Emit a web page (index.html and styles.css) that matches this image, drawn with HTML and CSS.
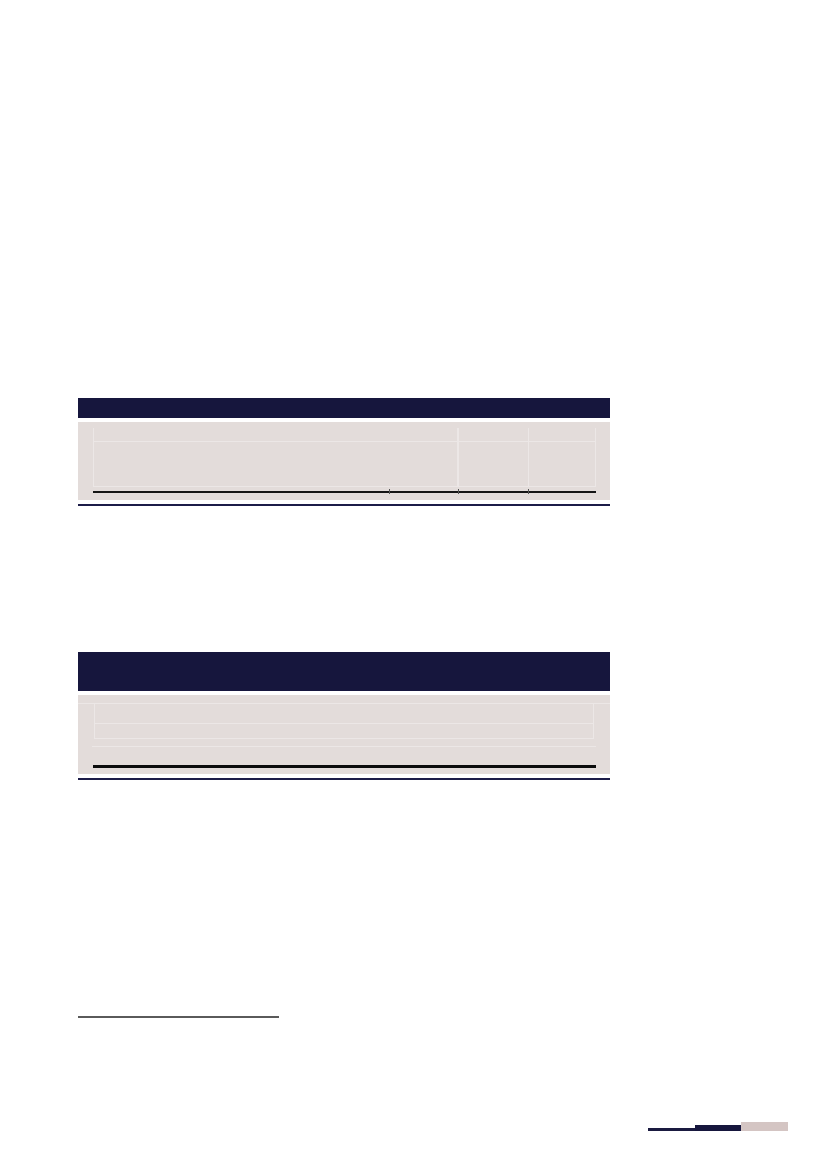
FILE: index.html
```html
<!DOCTYPE html>
<html>
<head>
<meta charset="utf-8">
<link rel="stylesheet" href="styles.css">
</head>
<body>
<div class="page">
  <section class="tbl tbl-one">
    <div class="tbl-head"></div>
    <div class="tbl-body">
      <div class="grid grid-one">
        <div class="cell c1 r1"></div><div class="cell c2 r1"></div><div class="cell c3 r1 vl"></div><div class="cell c4 r1 vl vr"></div>
        <div class="cell c1 r2"></div><div class="cell c2 r2"></div><div class="cell c3 r2 vl"></div><div class="cell c4 r2 vl vr"></div>
      </div>
      <div class="rule rule-one">
        <span class="tick" style="left:296px"></span>
        <span class="tick" style="left:365px"></span>
        <span class="tick" style="left:435px"></span>
      </div>
    </div>
    <div class="tbl-foot"></div>
  </section>

  <section class="tbl tbl-two">
    <div class="tbl-head tall"></div>
    <div class="tbl-body body-two">
      <div class="band"></div>
      <div class="row2 rowa"></div>
      <div class="row2 rowb"></div>
      <div class="row2 rowc"></div>
      <div class="rule rule-two"></div>
    </div>
    <div class="tbl-foot"></div>
  </section>

  <div class="footnote-rule"></div>
</div>
<footer class="pager">
  <span class="p-thin"></span>
  <span class="p-navy"></span>
  <span class="p-pink"></span>
</footer>
</body>
</html>
```
FILE: styles.css
```css
html, body {
  margin: 0;
  padding: 0;
  background: #ffffff;
  font-family: "Liberation Sans", Arial, sans-serif;
}
.page {
  width: 827px;
  height: 1169px;
  padding: 398px 0 0 78px;
  box-sizing: border-box;
  position: relative;
}
.tbl {
  width: 532px;
  display: flex;
  flex-direction: column;
  gap: 4px;
}
.tbl-two { margin-top: 146px; }
.tbl-head {
  height: 20px;
  background: #16163d;
}
.tbl-head.tall { height: 39px; }
.tbl-body {
  background: #e3dcda;
  height: 78px;
  padding: 6px 14px 0 15px;
  box-sizing: border-box;
  position: relative;
}
.tbl-foot {
  height: 2px;
  background: #1c1c48;
}
.grid-one {
  display: grid;
  grid-template-columns: 296px 69px 70px 68px;
  grid-template-rows: 14px 44px;
  border-bottom: 1px solid #ece7e6;
}
.cell { box-sizing: border-box; }
.c1 { border-left: 1px solid #ece7e6; }
.r1 { border-bottom: 1px solid #ece7e6; }
.vl { border-left: 1px solid #ece7e6; }
.vr { border-right: 1px solid #ece7e6; }
.c2.r1, .c2.r2 { border-right: 1px solid #ece7e6; }
.rule {
  position: relative;
  height: 2px;
  background: #151515;
}
.rule-one { margin-top: 4px; width: 503px; }
.tick {
  position: absolute;
  top: -2px;
  width: 1px;
  height: 5px;
  background: #555;
}
.body-two {
  height: 79px;
  padding: 0 14px 0 15px;
}
.band {
  height: 8px;
  margin: 0 -14px 0 -15px;
  border-bottom: 1px solid #ece7e6;
}
.row2 {
  border-left: 1px solid #ece7e6;
  border-right: 1px solid #ece7e6;
  border-bottom: 1px solid #ece7e6;
  box-sizing: border-box;
  margin-left: 1px;
  width: 500px;
}
.rowa { height: 20px; }
.rowb { height: 15px; }
.rowc { height: 8px; margin-left: -1px; width: 504px; border-left: none; border-right: none; }
.rule-two {
  margin-top: 18px;
  width: 503px;
  height: 3px;
  background: #0c0c0c;
}
.footnote-rule {
  margin-top: 236px;
  width: 201px;
  height: 2px;
  background: #5a5a5a;
}
.pager {
  position: absolute;
  left: 648px;
  top: 1122px;
  display: flex;
  align-items: flex-end;
}
.p-thin { width: 47px; height: 3px; background: #1a1a40; }
.p-navy { width: 46px; height: 6px; background: #16163d; }
.p-pink { width: 47px; height: 9px; background: #d4c5c3; }
```
